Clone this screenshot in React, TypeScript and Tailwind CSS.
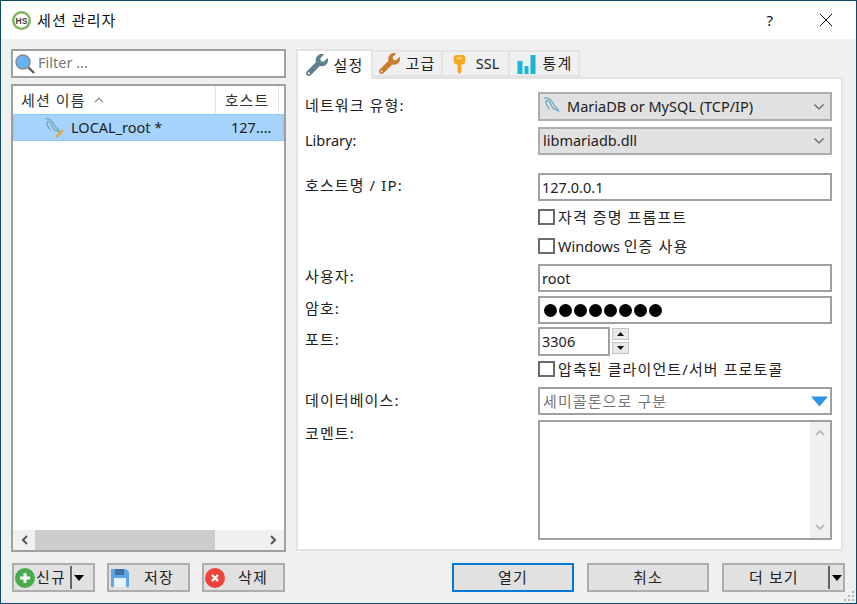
import React from 'react';
import { FaWrench } from 'react-icons/fa';

const font = { fontFamily: '"Noto Sans", "Noto Sans CJK KR", sans-serif' };

const Ko = ({ children }: { children: React.ReactNode }) => (
  <span className="text-[15px] tracking-[1.1px]">{children}</span>
);

const Dolphin = ({ className = '', tip = false }: { className?: string; tip?: boolean }) => (
  <svg viewBox="0 0 20 20" className={className} fill="none">
    <path
      d="M1 2c3.500-.8 6 .5 7.500 3.500 1.200 2.600 3 4.500 5 6.500.6.700 1 1.400 1.300 2.300-1.500-1-3-1.300-4.300-2C8.500 11 8 9 7 7 6 5 4.500 4 3 4.500c-.8 1.500-.2 3 .8 4.500 1 1.300 1.700 2 1.700 3.500"
      stroke="#6fa8bf"
      strokeWidth="1.300"
    />
    {tip && <path d="M12 19l6-6.500" stroke="#f0a030" strokeWidth="2.200" />}
  </svg>
);

const Chevron = () => (
  <svg width="12" height="8" viewBox="0 0 12 8" fill="none" className="shrink-0">
    <path d="M1.500 1.500L6 6l4.500-4.500" stroke="#5f5f5f" strokeWidth="1.200" />
  </svg>
);

const Caret = () => (
  <svg width="10" height="6" viewBox="0 0 10 6" className="shrink-0">
    <path d="M0 0h10L5 6z" fill="#000" />
  </svg>
);

const Label = ({ children, pt }: { children: React.ReactNode; pt: string }) => (
  <div className={`w-[233px] shrink-0 leading-[20px] text-[#222] ${pt}`}>{children}</div>
);

const Field = ({ label, value, mt, pt }: { label: React.ReactNode; value: string; mt: string; pt: string }) => (
  <div className={`flex ${mt}`}>
    <Label pt={pt}>{label}</Label>
    <div className="h-[28px] flex-1 border-2 border-[#a0a0a0] bg-white px-[2px] leading-[24px] text-[#222]">{value}</div>
  </div>
);

const Check = ({ label, mt }: { label: React.ReactNode; mt: string }) => (
  <div className={`ml-[233px] flex h-[20px] items-center gap-[3px] ${mt}`}>
    <span className="h-[16px] w-[17px] border-2 border-[#6a6a6a] bg-white" />
    <span className="text-[#222]">{label}</span>
  </div>
);

const Tab = ({ icon, label, active = false, width }: { icon: React.ReactNode; label: React.ReactNode; active?: boolean; width: string }) => (
  <div
    className={`flex items-center justify-center gap-[6px] border-2 border-[#e3e3e3] ${width} ${
      active ? 'z-10 -mb-[2px] h-[30px] border-b-0 bg-white' : 'h-[27px] -ml-[2px] bg-[#f0f0f0]'
    }`}
  >
    {icon}
    <span className="text-[#222]">{label}</span>
  </div>
);

const Button = ({ children, width, primary = false }: { children: React.ReactNode; width: string; primary?: boolean }) => (
  <div
    className={`flex h-[29px] items-center border-2 bg-[#e1e1e1] text-[#222] ${width} ${
      primary ? 'border-[#0078d7]' : 'border-[#adadad]'
    }`}
  >
    {children}
  </div>
);

export default function App() {
  return (
    <div style={font} className="flex h-[604px] w-[857px] flex-col overflow-hidden border border-[#0f4a6b] bg-[#f0f0f0] text-[14.5px]">
      {/* title bar */}
      <div className="flex h-[38px] shrink-0 items-center bg-white pl-[11px]">
        <svg width="19" height="19" viewBox="0 0 19 19">
          <circle cx="9.500" cy="9.500" r="9.500" fill="#7fb35c" />
          <circle cx="9.500" cy="9.500" r="7" fill="#fff" />
          <text x="9.500" y="12.500" textAnchor="middle" fontSize="8.500" fontWeight="700" fill="#3d3d3d" fontFamily="Liberation Sans">HS</text>
        </svg>
        <span className="ml-[6px] text-[#111]"><Ko>세션 관리자</Ko></span>
        <span className="ml-auto text-[15px] text-[#111]">?</span>
        <svg width="12" height="12" viewBox="0 0 12 12" className="ml-[47px] mr-[24px]">
          <path d="M0 0l12 12M12 0L0 12" stroke="#111" strokeWidth="1" />
        </svg>
      </div>

      <div className="flex min-h-0 flex-1 gap-[10px] pl-[10px] pr-[13px] pt-[10px]">
        {/* left column */}
        <div className="flex w-[275px] shrink-0 flex-col gap-[6px]">
          <div className="flex h-[29px] items-center border-2 border-[#a0a0a0] bg-white pl-[1px]">
            <svg width="22" height="22" viewBox="0 0 22 22">
              <path d="M13 13l7 7" stroke="#5c5c5c" strokeWidth="2.400" />
              <circle cx="9" cy="9" r="7" fill="#63b3f5" stroke="#8a8a8a" strokeWidth="1.500" />
            </svg>
            <span className="ml-[2px] -mt-[2px] text-[#777]">Filter ...</span>
          </div>
          <div className="flex h-[468px] flex-col border-2 border-[#a0a0a0] bg-white">
            <div className="flex h-[28px] shrink-0 text-[#333]">
              <div className="flex w-[203px] items-center border-r border-[#e5e5e5] pl-[8px]">
                <Ko>세션 이름</Ko>
                <svg width="10" height="6" viewBox="0 0 10 6" className="ml-[8px]">
                  <path d="M1 5l4-4 4 4" fill="none" stroke="#888" strokeWidth="1.200" />
                </svg>
              </div>
              <div className="flex w-[63px] items-center justify-center border-r border-[#e5e5e5]"><Ko>호스트</Ko></div>
            </div>
            <div className="flex h-[27px] shrink-0 items-center border border-[#90c8f6] bg-[#a6d3fb] text-[#222]">
              <Dolphin tip className="ml-[30px] h-[21px] w-[21px]" />
              <span className="ml-[6px] w-[160px]">LOCAL_root *</span>
              <span>127....</span>
            </div>
            <div className="flex-1" />
            <div className="flex h-[20px] shrink-0 items-center bg-[#f0f0f0]">
              <div className="flex w-[22px] justify-center">
                <svg width="7" height="10" viewBox="0 0 7 10"><path d="M6 1L2 5l4 4" fill="none" stroke="#555" strokeWidth="2" /></svg>
              </div>
              <div className="h-full w-[180px] bg-[#cdcdcd]" />
              <div className="ml-auto flex w-[22px] justify-center">
                <svg width="7" height="10" viewBox="0 0 7 10"><path d="M1 1l4 4-4 4" fill="none" stroke="#555" strokeWidth="2" /></svg>
              </div>
            </div>
          </div>
        </div>

        {/* right column */}
        <div className="flex min-w-0 flex-1 flex-col">
          <div className="flex h-[28px] shrink-0 items-end">
            <Tab active width="w-[77px]" label={<Ko>설정</Ko>} icon={<FaWrench className="h-[22px] w-[22px] text-[#5f7f8f]" />} />
            <Tab width="w-[72px]" label={<Ko>고급</Ko>} icon={<FaWrench className="h-[21px] w-[21px] text-[#cc7a2c]" />} />
            <Tab
              width="w-[69px]"
              label="SSL"
              icon={
                <svg width="15" height="20" viewBox="0 0 14 21" className="mr-[3px]">
                  <path d="M3 1h8l2 2v6l-2 2H9v8l-2 2-2-2V11H3L1 9V3z" fill="#f4a81c" />
                  <rect x="4" y="3.500" width="6" height="2" rx="1" fill="#fbd78c" />
                </svg>
              }
            />
            <Tab
              width="w-[72px]"
              label={<Ko>통계</Ko>}
              icon={
                <svg width="21" height="20" viewBox="0 0 20 20">
                  <path d="M1 7h5v13H1zM8 12h4v8H8zM14 1h5v19h-5z" fill="#1cb4d6" />
                </svg>
              }
            />
          </div>
          <div className="h-[474px] border-2 border-[#e3e3e3] bg-white pl-[7px] pr-[9px] pt-[13px]">
            <div className="flex">
              <Label pt="pt-[3px]"><Ko>네트워크 유형:</Ko></Label>
              <div className="flex h-[29px] flex-1 items-center border-2 border-[#adadad] bg-[#e1e1e1] pl-[3px] pr-[5px] text-[#222]">
                <Dolphin className="h-[21px] w-[21px]" />
                <span className="ml-[3px]">MariaDB or MySQL (TCP/IP)</span>
                <span className="ml-auto flex"><Chevron /></span>
              </div>
            </div>
            <div className="mt-[6px] flex">
              <Label pt="pt-[3px]">Library:</Label>
              <div className="flex h-[28px] flex-1 items-center border-2 border-[#adadad] bg-[#e1e1e1] pl-[3px] pr-[5px] text-[#222]">
                <span>libmariadb.dll</span>
                <span className="ml-auto flex"><Chevron /></span>
              </div>
            </div>
            <Field label={<Ko>호스트명 / IP:</Ko>} value="127.0.0.1" mt="mt-[18px]" pt="pt-[2px]" />
            <Check label={<Ko>자격 증명 프롬프트</Ko>} mt="mt-[6px]" />
            <Check label={<>Windows <Ko>인증 사용</Ko></>} mt="mt-[9px]" />
            <Field label={<Ko>사용자:</Ko>} value="root" mt="mt-[8px]" pt="pt-[2px]" />
            <div className="mt-[4px] flex">
              <Label pt="pt-[2px]"><Ko>암호:</Ko></Label>
              <div className="flex h-[28px] flex-1 items-center gap-[2px] border-2 border-[#a0a0a0] bg-white pl-[4px]">
                {[0, 1, 2, 3, 4, 5, 6, 7].map(i => (
                  <span key={i} className="h-[13px] w-[13px] rounded-full bg-black" />
                ))}
              </div>
            </div>
            <div className="mt-[3px] flex">
              <Label pt="pt-[2px]"><Ko>포트:</Ko></Label>
              <div className="h-[29px] w-[72px] border-2 border-[#a0a0a0] bg-white px-[2px] leading-[25px] text-[#222]">3306</div>
              <div className="ml-[2px] flex flex-col gap-[2px] pt-[1px]">
                <div className="flex h-[12px] w-[17px] items-center justify-center border border-[#c4c4c4] bg-[#e8e8e8]">
                  <svg width="7" height="4" viewBox="0 0 7 4"><path d="M3.500 0L7 4H0z" fill="#111" /></svg>
                </div>
                <div className="flex h-[12px] w-[17px] items-center justify-center border border-[#c4c4c4] bg-[#e8e8e8]">
                  <svg width="7" height="4" viewBox="0 0 7 4"><path d="M0 0h7L3.500 4z" fill="#111" /></svg>
                </div>
              </div>
            </div>
            <Check label={<Ko>압축된 클라이언트/서버 프로토콜</Ko>} mt="mt-[3px]" />
            <div className="mt-[8px] flex">
              <Label pt="pt-[3px]"><Ko>데이터베이스:</Ko></Label>
              <div className="flex h-[28px] flex-1 items-center border-2 border-[#a0a0a0] bg-white pl-[3px] pr-[2px] text-[#777]">
                <Ko>세미콜론으로 구분</Ko>
                <svg width="17" height="11" viewBox="0 0 19 11" className="ml-auto">
                  <path d="M0 0h19L9.500 11z" fill="#2a93ea" />
                </svg>
              </div>
            </div>
            <div className="mt-[5px] flex">
              <Label pt="pt-[3px]"><Ko>코멘트:</Ko></Label>
              <div className="flex h-[120px] flex-1 justify-end border-2 border-[#a0a0a0] bg-white">
                <div className="flex w-[20px] flex-col items-center justify-between bg-[#f0f0f0] py-[7px]">
                  <svg width="10" height="7" viewBox="0 0 10 7"><path d="M1 6l4-4 4 4" fill="none" stroke="#bdbdbd" strokeWidth="2" /></svg>
                  <svg width="10" height="7" viewBox="0 0 10 7"><path d="M1 1l4 4 4-4" fill="none" stroke="#bdbdbd" strokeWidth="2" /></svg>
                </div>
              </div>
            </div>
          </div>
        </div>
      </div>

      {/* footer */}
      <div className="relative flex h-[40px] shrink-0 items-start pl-[11px]">
        <Button width="w-[83px]">
          <svg width="20" height="20" viewBox="0 0 20 20" className="ml-[1px]">
            <circle cx="10" cy="10" r="10" fill="#45ad4e" />
            <path d="M10 5v10M5 10h10" stroke="#fff" strokeWidth="3" />
          </svg>
          <span className="ml-[1px]"><Ko>신규</Ko></span>
          <span className="ml-[4px] h-[23px] w-[2px] bg-[#666]" />
          <span className="ml-[2px] flex"><Caret /></span>
        </Button>
        <Button width="ml-[12px] w-[83px]">
          <svg width="18" height="19" viewBox="0 0 18 19" className="ml-[2px]">
            <path d="M0 1h15l3 3v15H0z" fill="#5aa6e6" />
            <rect x="4" y="1" width="9" height="6" fill="#3f6f9c" />
            <rect x="3" y="10" width="12" height="9" fill="#e9f3fb" />
          </svg>
          <span className="ml-[15px]"><Ko>저장</Ko></span>
        </Button>
        <Button width="ml-[12px] w-[83px]">
          <svg width="20" height="20" viewBox="0 0 20 20" className="ml-[1px]">
            <circle cx="10" cy="10" r="10" fill="#f0413a" />
            <path d="M7 7l6 6M13 7l-6 6" stroke="#fff" strokeWidth="2.400" />
          </svg>
          <span className="ml-[13px]"><Ko>삭제</Ko></span>
        </Button>
        <Button primary width="ml-[167px] w-[122px] justify-center"><Ko>열기</Ko></Button>
        <Button width="ml-[13px] w-[122px] justify-center"><Ko>취소</Ko></Button>
        <Button width="ml-[13px] w-[123px]">
          <span className="ml-[25px]"><Ko>더 보기</Ko></span>
          <span className="ml-auto h-[23px] w-[2px] bg-[#666]" />
          <span className="ml-[2px] mr-[1px] flex"><Caret /></span>
        </Button>
        <svg width="11" height="11" viewBox="0 0 11 11" className="absolute bottom-[1px] right-[1px]">
          <path d="M8 0h2v2H8zM4 4h2v2H4zM8 4h2v2H8zM0 8h2v2H0zM4 8h2v2H4zM8 8h2v2H8z" fill="#b5b5b5" />
        </svg>
      </div>
    </div>
  );
}
